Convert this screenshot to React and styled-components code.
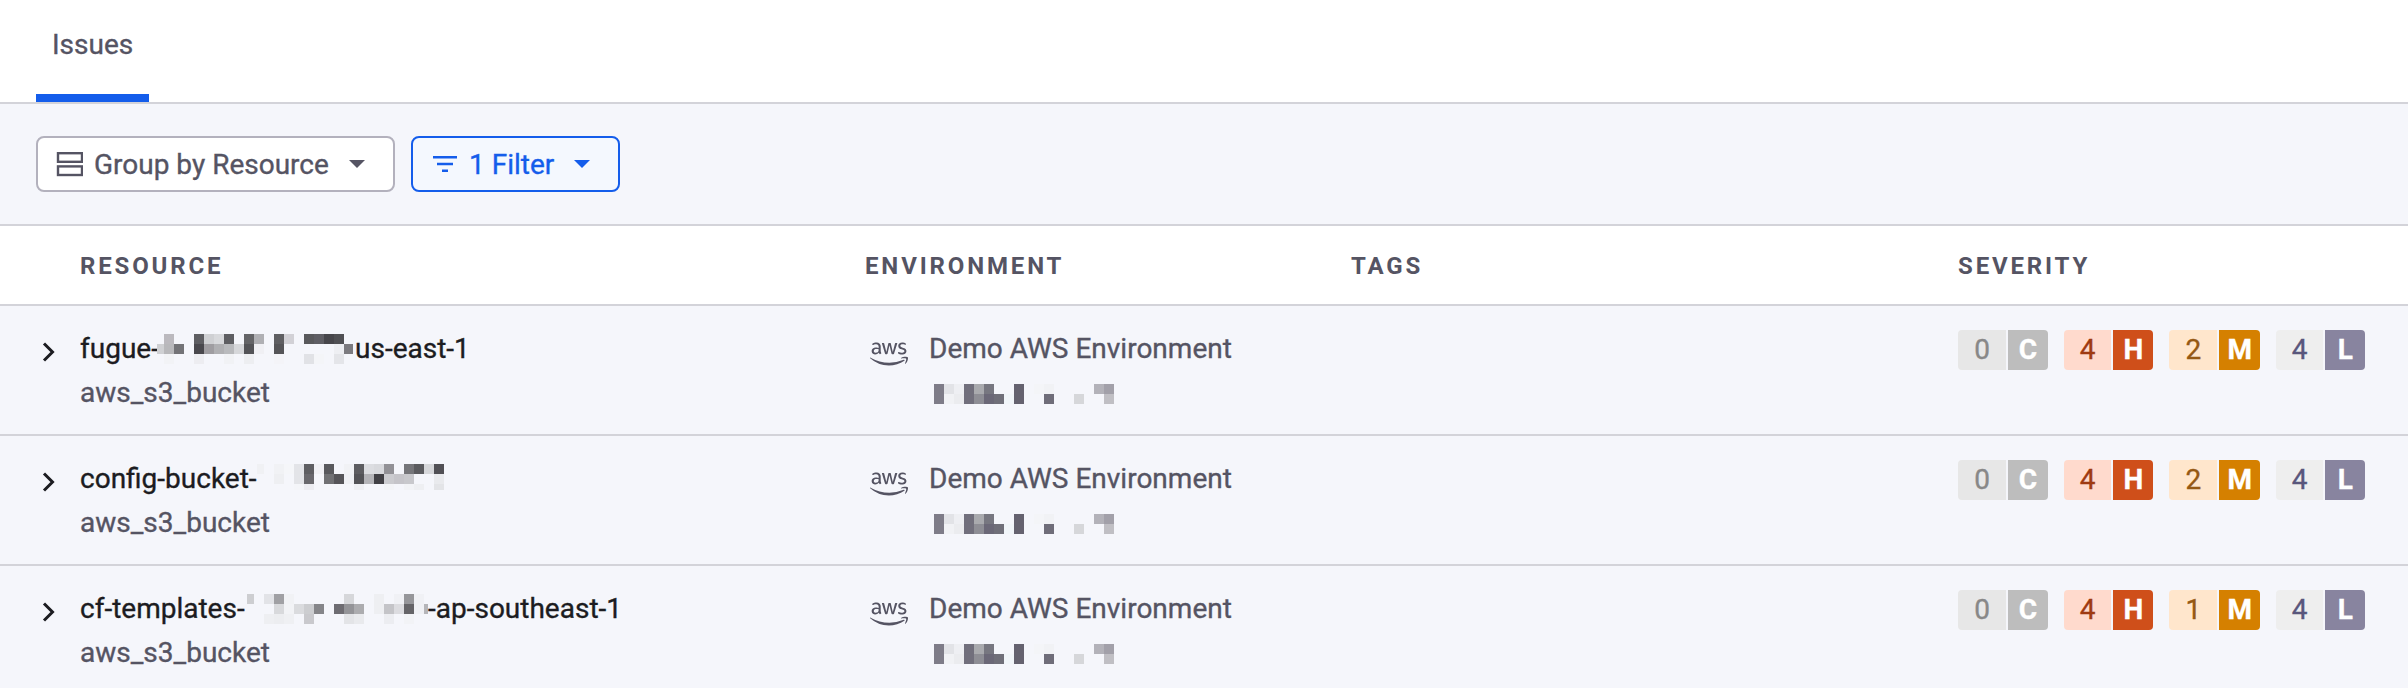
import React from "react";
import styled, { createGlobalStyle } from "styled-components";
import { FaAws } from "react-icons/fa";

const GlobalStyle = createGlobalStyle`
  * { box-sizing: border-box; }
  html, body { margin: 0; padding: 0; }
  body {
    background: #f5f6fb;
    color: #555463;
    font-family: Roboto, "Liberation Sans", sans-serif;
    font-size: 28px;
    line-height: 44px;
    -webkit-text-stroke: 0.35px currentColor;
    overflow: hidden;
  }
`;

const Page = styled.main`
  width: 100%;
  height: 688px;
  overflow: hidden;
`;

const TabBar = styled.nav`
  display: flex;
  height: 104px;
  padding-left: 36px;
  background: #fff;
  border-bottom: 2px solid #d3d3d9;
`;

const Tab = styled.div`
  width: 113px;
  padding: 23px 0 0 16px;
  border-bottom: 8px solid #145deb;
`;

const Toolbar = styled.div`
  display: flex;
  gap: 16px;
  height: 122px;
  padding: 32px 36px;
  border-bottom: 2px solid #d3d3d9;
`;

const Button = styled.button`
  display: flex;
  align-items: center;
  width: ${(p) => p.$width}px;
  height: 56px;
  padding: 0 28px 0 ${(p) => p.$inset}px;
  border: 2px solid ${(p) => (p.$active ? "#145deb" : "#b3b1bd")};
  border-radius: 8px;
  background: ${(p) => (p.$active ? "#f4f8fe" : "#fff")};
  color: ${(p) => (p.$active ? "#145deb" : "#555463")};
  font: inherit;
  white-space: nowrap;
`;

const ButtonLabel = styled.span`
  margin-left: ${(p) => p.$gap}px;
  padding-top: 2px;
`;

const Caret = styled.span`
  margin-left: auto;
  border: 8px solid transparent;
  border-top-color: currentColor;
  border-bottom: 0;
`;

const Row = styled.div`
  display: grid;
  grid-template-columns: 80px 785px 486px 607px 1fr;
  height: ${(p) => (p.$head ? 80 : 130)}px;
  border-bottom: 2px solid #d3d3d9;
  background: ${(p) => (p.$head ? "#fff" : "transparent")};
`;

const HeadCell = styled.div`
  padding-top: 18px;
  font-size: 24px;
  font-weight: 700;
  letter-spacing: 2.85px;
  -webkit-text-stroke: 0;
`;

const Expand = styled.div`
  display: flex;
  padding: 35px 0 0 41px;
`;

const ResourceCell = styled.div`
  padding-top: 21px;
`;

const ResourceName = styled.div`
  display: flex;
  height: 44px;
  color: #1c1c21;
  white-space: pre;
`;

const NamePart = styled.span`
  width: ${(p) => (p.$width ? `${p.$width}px` : "auto")};
`;

const EnvCell = styled.div`
  display: flex;
  padding-top: 21px;
`;

const Logo = styled.div`
  display: flex;
  width: 64px;
  padding: 8px 0 0 5px;
`;

const Account = styled.div`
  display: flex;
  padding: 13px 0 0 5px;
`;

const SeverityCell = styled.div`
  display: flex;
  gap: 16px;
  padding-top: 24px;
`;

const Badge = styled.div`
  display: grid;
  grid-template-columns: ${(p) => p.$cols};
  gap: 2px;
  height: 40px;
  line-height: 40px;
  text-align: center;
`;

const Count = styled.span`
  border-radius: 4px 0 0 4px;
  background: ${(p) => p.$bg};
  color: ${(p) => p.$fg};
`;

const Letter = styled.span`
  border-radius: 0 4px 4px 0;
  background: ${(p) => p.$bg};
  color: #fff;
  font-weight: 700;
`;

const MosaicSvg = styled.svg`
  flex: none;
  display: block;
  margin-top: ${(p) => p.$top || 0}px;
`;

// Each row lists "column:colour" pairs; column -1 is the narrow lead-in cell.
const MOSAICS = {
  fugue: {
    lead: 7,
    width: 198,
    height: 30,
    rows: [
      "0:bbb9be 3:5e5e62 4:cfd0d3 5:d8d9dc 6:5e5e62 8:646467 9:b0b0b4 11:5f5f62 12:d2d1d6 14:59595c 15:5f5e64 16:47464b 17:505054",
      "-1:cfd0d3 0:b8b8bb 1:737377 3:49484d 4:9f9da1 5:b0b0b3 6:b9babd 7:d6d7da 8:535357 9:f0f0f4 11:555558 17:eeeff3 18:7c7b80",
      "0:f2f3f6 3:ededf1 6:f1f2f5 8:edeef1 11:f4f4f8 14:e1e2e6 15:f4f5f8 17:e4e5e9",
    ],
  },
  config: {
    lead: 7,
    width: 187,
    height: 26,
    rows: [
      "-1:f0f1f4 1:f1f2f5 2:f5f6f9 3:e3e4e8 4:5e5e62 5:f0f0f4 6:59595d 8:f1f2f5 9:5d5d61 10:dcdde1 11:d8d9dd 12:929196 14:757579 15:5b5b5f 16:d6d7da 17:515055",
      "1:eeeff2 3:e3e4e8 4:69686d 6:717174 7:565559 8:eff0f4 9:535357 10:b4b4b8 11:414045 12:cbcbcf 13:c5c4c9 14:c8c8cc 17:e9eaed",
      "3:f4f5f9 4:ececf1 9:eeeff3 12:f3f4f7 14:f2f3f6 15:eeeff2 17:e3e4e7",
    ],
  },
  templates: {
    lead: 7,
    width: 181,
    height: 30,
    rows: [
      "-1:cdced1 1:e2e3e7 2:a0a0a4 3:f1f2f5 9:d6d7da 12:eeeff2 14:f0f1f5 15:96969a 16:f0f1f5",
      "2:d8d9dc 3:f2f3f6 4:dadbde 5:cccdd0 6:858589 8:6e6c72 9:949498 10:acacaf 12:eeeff2 13:c4c4c8 14:dcdce0 15:656468 16:f0f1f5 17:b5b5b9",
      "1:eeeff2 2:ecedf0 3:eff0f3 5:c9c9cd 9:e3e4e7 10:e9eaed 13:ecedf1 15:f2f3f6",
    ],
  },
  account: {
    lead: 0,
    width: 180,
    height: 20,
    rows: [
      "0:7e7c88 1:e2e3e7 2:eeeff3 3:716f7c 4:a9aaae 5:777780 8:65626f 10:f4f5f8 11:f1f2f5 16:b3b2b9 17:a2a0a9",
      "0:7e7c88 1:f1f2f5 2:ebecef 3:716f7c 4:8e8e95 5:6b6877 6:706f79 7:f1f5f9 8:65626f 11:6f6d79 14:d6d7da 17:c0bfc4",
    ],
  },
};

function Mosaic({ name, top }) {
  const { lead, width, height, rows } = MOSAICS[name];
  return (
    <MosaicSvg $top={top} width={width} height={height} shapeRendering="crispEdges">
      {rows.flatMap((row, y) =>
        row.split(" ").map((cell) => {
          const [col, color] = cell.split(":");
          const first = col === "-1";
          return (
            <rect
              key={`${y}-${col}`}
              x={first ? 0 : lead + Number(col) * 10}
              y={y * 10}
              width={first ? lead : col === "18" ? 9 : col === "17" && name === "templates" ? 5 : 10}
              height="10"
              fill={`#${color}`}
            />
          );
        })
      )}
    </MosaicSvg>
  );
}

const SEVERITIES = [
  { letter: "C", cols: "48px 40px", bg: "#e7e7e7", fg: "#888888", solid: "#bdbdbd" },
  { letter: "H", cols: "47.4px 40px", bg: "#ffdacd", fg: "#9f3a12", solid: "#cf4f1a" },
  { letter: "M", cols: "48px 40.6px", bg: "#ffe6cc", fg: "#955914", solid: "#d58000" },
  { letter: "L", cols: "47.4px 40px", bg: "#eeeeee", fg: "#59567c", solid: "#88849f" },
];

const RESOURCES = [
  { prefix: "fugue-", prefixWidth: 77, mosaic: "fugue", suffix: "us-east-1", counts: [0, 4, 2, 4] },
  { prefix: "config-bucket-", prefixWidth: 177, mosaic: "config", suffix: "", counts: [0, 4, 2, 4] },
  { prefix: "cf-templates-", prefixWidth: 167, mosaic: "templates", suffix: "-ap-southeast-1", counts: [0, 4, 1, 4] },
];

function ResourceRow({ item }) {
  return (
    <Row>
      <Expand>
        <svg width="16" height="22" viewBox="0 0 16 22" fill="none" stroke="#1c1c21" strokeWidth="3">
          <path d="M3 2.5 11.5 11 3 19.5" />
        </svg>
      </Expand>
      <ResourceCell>
        <ResourceName>
          <NamePart $width={item.prefixWidth}>{item.prefix}</NamePart>
          <Mosaic name={item.mosaic} top={7} />
          <NamePart>{item.suffix}</NamePart>
        </ResourceName>
        <div>aws_s3_bucket</div>
      </ResourceCell>
      <EnvCell>
        <Logo>
          <FaAws size={38} />
        </Logo>
        <div>
          <div>Demo AWS Environment</div>
          <Account>
            <Mosaic name="account" />
          </Account>
        </div>
      </EnvCell>
      <div />
      <SeverityCell>
        {SEVERITIES.map((s, i) => (
          <Badge key={s.letter} $cols={s.cols}>
            <Count $bg={s.bg} $fg={s.fg}>{item.counts[i]}</Count>
            <Letter $bg={s.solid}>{s.letter}</Letter>
          </Badge>
        ))}
      </SeverityCell>
    </Row>
  );
}

export default function App() {
  return (
    <Page>
      <GlobalStyle />
      <TabBar>
        <Tab>Issues</Tab>
      </TabBar>
      <Toolbar>
        <Button $width={359} $inset={17}>
          <svg width="28" height="26" viewBox="0 0 28 26" fill="none" stroke="currentColor" strokeWidth="2.4">
            <rect x="3" y="2.2" width="24" height="8.6" />
            <rect x="3" y="15.4" width="24" height="8.6" />
          </svg>
          <ButtonLabel $gap={11}>Group by Resource</ButtonLabel>
          <Caret />
        </Button>
        <Button $active $width={209} $inset={20}>
          <svg width="24" height="16" viewBox="0 0 24 16" fill="currentColor">
            <path d="M0 0h24v2.6H0zM4 6.7h16v2.6H4zM9 13.4h6V16H9z" />
          </svg>
          <ButtonLabel $gap={12}>1 Filter</ButtonLabel>
          <Caret />
        </Button>
      </Toolbar>
      <Row $head>
        <div />
        <HeadCell>RESOURCE</HeadCell>
        <HeadCell>ENVIRONMENT</HeadCell>
        <HeadCell>TAGS</HeadCell>
        <HeadCell>SEVERITY</HeadCell>
      </Row>
      {RESOURCES.map((item) => (
        <ResourceRow key={item.prefix} item={item} />
      ))}
    </Page>
  );
}
